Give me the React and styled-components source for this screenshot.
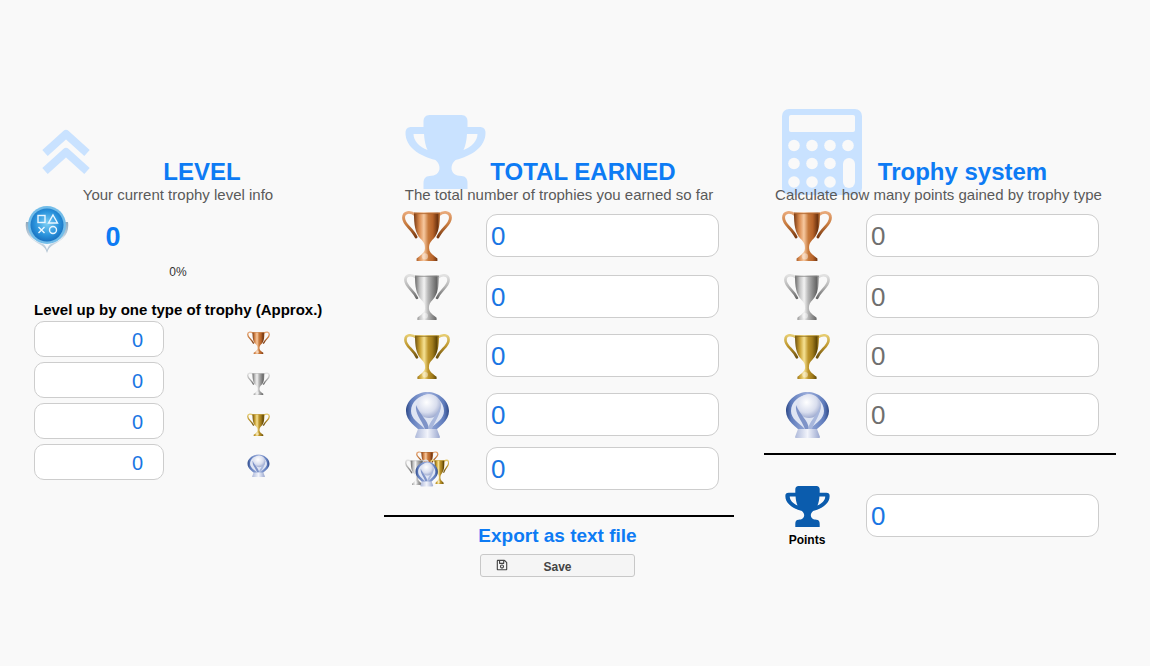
import React from "react";
import styled, { createGlobalStyle } from "styled-components";
import { FaRegSave } from "react-icons/fa";

const Global = createGlobalStyle`
  html, body { margin: 0; padding: 0; background: #f9f9f9; font-family: "Liberation Sans", Arial, sans-serif; }
  #root { width: 1150px; height: 666px; overflow: hidden; }
`;

const Page = styled.main`
  display: flex;
  align-items: flex-start;
  padding: 157px 0 0 18px;
  box-sizing: border-box;
  height: 666px;
`;
const Column = styled.section`
  position: relative;
  flex: none;
  width: ${(p) => p.$w}px;
  margin-right: ${(p) => p.$mr}px;
`;
const Watermark = styled.div`
  position: absolute;
  left: ${(p) => p.$x}px;
  top: ${(p) => p.$y}px;
  line-height: 0;
  z-index: 0;
`;
const Header = styled.header`
  position: relative;
  z-index: 1;
  text-align: center;
  padding-right: ${(p) => p.$pr || 0}px;
  margin-bottom: 10px;
`;
const Title = styled.h2`
  margin: 0;
  padding-left: 48px;
  font-size: 24px;
  line-height: 29px;
  font-weight: 700;
  color: #0d7bf4;
`;
const Subtitle = styled.p`
  margin: 0;
  font-size: 15px;
  line-height: 18px;
  color: #5a5a5a;
`;
const Row = styled.div`
  display: flex;
  align-items: center;
  height: 43px;
  margin-bottom: ${(p) => p.$gap || 0}px;
`;
const IconCell = styled.div`
  flex: none;
  width: 86px;
  margin-right: 16px;
  display: flex;
  justify-content: center;
  align-items: center;
  height: 43px;
  line-height: 0;
`;
const BigInput = styled.input`
  flex: none;
  width: 233px;
  height: 43px;
  box-sizing: border-box;
  padding: 2px 4px 0;
  font: 26px "Liberation Sans", Arial, sans-serif;
  color: ${(p) => (p.$muted ? "#6f6f6f" : "#1a76e3")};
  background: #fff;
  border: 1px solid #cdcdcd;
  border-radius: 11px;
  outline: none;
`;
const LevelRow = styled.div`
  display: flex;
  align-items: flex-start;
  height: 48px;
  padding-left: 7px;
  margin-top: -9px;
`;
const LevelValue = styled.div`
  width: 88px;
  padding-top: 16px;
  line-height: 32px;
  text-align: center;
  font-size: 27px;
  font-weight: 700;
  color: #0d7bf4;
`;
const Percent = styled.div`
  text-align: center;
  font-size: 12px;
  line-height: 14px;
  color: #333;
  margin-top: 12px;
`;
const LevelUpHeading = styled.h3`
  margin: 22px 0 3px 16px;
  font-size: 15px;
  line-height: 17px;
  font-weight: 700;
  color: #000;
  white-space: nowrap;
`;
const SmallRow = styled.div`
  display: flex;
  align-items: center;
  height: 36px;
  margin: 0 0 5px 16px;
`;
const SmallInput = styled.input`
  flex: none;
  width: 130px;
  height: 36px;
  box-sizing: border-box;
  padding: 2px 20px 0 0;
  text-align: right;
  font: 20px "Liberation Sans", Arial, sans-serif;
  color: #1a76e3;
  background: #fff;
  border: 1px solid #cdcdcd;
  border-radius: 10px;
  outline: none;
`;
const SmallIcon = styled.div`
  width: 188px;
  padding-top: 7px;
  margin-left: 14px;
  display: flex;
  justify-content: center;
  line-height: 0;
`;
const Rule = styled.hr`
  border: 0;
  height: 2px;
  background: #000;
  margin: ${(p) => p.$top}px 0 ${(p) => p.$bottom}px;
`;
const ExportBlock = styled.div`
  display: flex;
  flex-direction: column;
  align-items: center;
  padding-right: 3px;
`;
const ExportTitle = styled.h3`
  margin: 0 0 6px;
  font-size: 19px;
  line-height: 24px;
  font-weight: 700;
  color: #0d7bf4;
`;
const SaveButton = styled.button`
  position: relative;
  width: 155px;
  height: 23px;
  padding: 3px 0 0;
  background: #f5f5f5;
  border: 1px solid #c8c8c8;
  border-radius: 3px;
  font: 700 12px "Liberation Sans", Arial, sans-serif;
  color: #444;
  svg {
    position: absolute;
    left: 15px;
    top: 4px;
  }
`;
const PointsCell = styled.div`
  flex: none;
  width: 86px;
  margin-right: 16px;
  display: flex;
  flex-direction: column;
  align-items: center;
  line-height: 0;
  padding-top: 2px;
`;
const PointsLabel = styled.span`
  font-size: 12px;
  line-height: 14px;
  font-weight: 700;
  color: #000;
  margin-top: 6px;
`;

const TIERS = {
  bronze: ["#7a3a12", "#d98a4e", "#f7c9a0", "#b8642a", "#6e3410", "#c77a3d", "#e8a878"],
  silver: ["#6a6a6a", "#c4c4c4", "#f2f2f2", "#8e8e8e", "#666", "#b5b5b5", "#e2e2e2"],
  gold: ["#6e5210", "#c9a032", "#f6e294", "#a17c1c", "#614806", "#bd952c", "#e6cc70"],
};

const Defs = () => (
  <svg width="0" height="0" style={{ position: "absolute" }} aria-hidden="true">
    <defs>
      {Object.entries(TIERS).map(([k, c]) => (
        <React.Fragment key={k}>
          <linearGradient id={`${k}-b`} x1="0" x2="1" y1="0" y2="0">
            <stop offset="0" stopColor={c[0]} />
            <stop offset=".2" stopColor={c[1]} />
            <stop offset=".38" stopColor={c[2]} />
            <stop offset=".55" stopColor={c[5]} />
            <stop offset=".72" stopColor={c[3]} />
            <stop offset=".9" stopColor={c[4]} />
            <stop offset="1" stopColor={c[5]} />
          </linearGradient>
          <linearGradient id={`${k}-h`} x1="0" x2="0" y1="0" y2="1">
            <stop offset="0" stopColor={c[6]} />
            <stop offset=".5" stopColor={c[5]} />
            <stop offset="1" stopColor={c[0]} />
          </linearGradient>
        </React.Fragment>
      ))}
      <radialGradient id="pt-ball" cx=".4" cy=".35" r=".7">
        <stop offset="0" stopColor="#ffffff" />
        <stop offset=".6" stopColor="#d9deee" />
        <stop offset="1" stopColor="#98a5cc" />
      </radialGradient>
      <linearGradient id="pt-ring" x1="0" x2="1" y1="0" y2="0">
        <stop offset="0" stopColor="#2f4a88" />
        <stop offset=".12" stopColor="#5f7cbc" />
        <stop offset=".5" stopColor="#9fb0dc" />
        <stop offset=".88" stopColor="#5f7cbc" />
        <stop offset="1" stopColor="#2f4a88" />
      </linearGradient>
      <linearGradient id="pt-base" x1="0" x2="1" y1="0" y2="0">
        <stop offset="0" stopColor="#aeb9da" />
        <stop offset=".5" stopColor="#f2f4fb" />
        <stop offset="1" stopColor="#9aa7cf" />
      </linearGradient>
      <radialGradient id="lv-disc" cx=".5" cy=".45" r=".6">
        <stop offset="0" stopColor="#7ed0f5" />
        <stop offset=".6" stopColor="#2a93dc" />
        <stop offset="1" stopColor="#1467b8" />
      </radialGradient>
      <linearGradient id="lv-base" x1="0" x2="0" y1="0" y2="1">
        <stop offset="0" stopColor="#8fa9bd" />
        <stop offset=".6" stopColor="#cfdde8" />
        <stop offset="1" stopColor="#a8bccd" />
      </linearGradient>
    </defs>
  </svg>
);

const CupShape = ({ tier }) => (
  <g>
    <g fill="none" stroke={`url(#${tier}-h)`} strokeWidth="2.800" strokeLinecap="round">
      <path d="M13 5C8 1 1.500 1.500 1.500 7.500c0 7 8 10 12 19" />
      <path d="M35 5C40 1 46.500 1.500 46.500 7.500c0 7-8 10-12 19" />
    </g>
    <path
      d="M11.500 2.500h25c0 12-1 20-6.500 26-3 3-4 5-4 9 0 4 4 7 8 10v2.500H14V47.500c4-3 8-6 8-10 0-4-1-6-4-9-5.500-6-6.500-14-6.500-26z"
      fill={`url(#${tier}-b)`}
    />
    <path d="M11.500 2.500h25V4h-25z" fill={`url(#${tier}-h)`} opacity=".8" />
    <ellipse cx="22" cy="45.500" rx="3" ry="3" fill="#fff" opacity=".4" />
  </g>
);

const PlatinumShape = () => (
  <g>
    <path
      d="M22.500 1C33 1 44 9 44 20c0 10-10 16-17 22h-9C11 36 1 30 1 20 1 9 12 1 22.500 1z"
      fill="url(#pt-ring)"
    />
    <path d="M22.500 4C31 4 39 11 39 20c0 8-8 12-14 18h-5C14 32 6 28 6 20 6 11 14 4 22.500 4z" fill="#dfe5f3" />
    <circle cx="24" cy="15" r="12" fill="url(#pt-ball)" />
    <path d="M11 14c-1 9 5 14 9 24h4C23 29 15 24 11 14z" fill="#7e93c8" />
    <path d="M35 15c1 9-5 14-8 23h-4c2-9 9-13 12-23z" fill="#a8b7dc" />
    <path d="M13 38h19l3 8c0 1-1 1-2 1H12c-1 0-2 0-2-1z" fill="url(#pt-base)" />
  </g>
);

const Medal = ({ tier, w, h }) => (
  <svg width={w} height={h} viewBox={tier === "platinum" ? "0 0 45 47" : "0 0 48 50"} preserveAspectRatio="none">
    {tier === "platinum" ? <PlatinumShape /> : <CupShape tier={tier} />}
  </svg>
);

const Combo = () => (
  <svg width="44" height="36" viewBox="0 0 44 36">
    <g transform="translate(11 0) scale(.47 .42)"><CupShape tier="bronze" /></g>
    <g transform="translate(0 8) scale(.5 .52)"><CupShape tier="silver" /></g>
    <g transform="translate(25 8) scale(.4 .5)"><CupShape tier="gold" /></g>
    <g transform="translate(10 10) scale(.52 .54)"><PlatinumShape /></g>
  </svg>
);

const LevelBadge = () => (
  <svg width="44" height="48" viewBox="0 0 44 48">
    <path d="M1 17C-1 30 8 36 16 40c3 2 5 4 6 8 1-4 3-6 6-8 8-4 17-10 15-23z" fill="url(#lv-base)" />
    <path d="M4 30c3 5 9 7 14 9 2 1 3 3 4 6 1-3 2-5 4-6 5-2 11-4 14-9-4 5-11 7-18 8-7-1-14-3-18-8z" fill="#f5f8fb" />
    <circle cx="22" cy="20" r="19" fill="#73bde9" />
    <circle cx="22" cy="20" r="16.500" fill="url(#lv-disc)" />
    <g fill="none" stroke="#eaf6ff" strokeWidth="1.400">
      <rect x="13" y="10.500" width="7" height="7" />
      <path d="M28 10l4.500 8h-9z" />
      <path d="M13.500 22l6 6M19.500 22l-6 6" />
      <circle cx="28" cy="25" r="3.500" />
    </g>
  </svg>
);

const TROPHY_D =
  "M24 0H56C60 0 62 3 62 6V12H74C78 12 80 14 80 18C80 32 66 41 50 45C47 48 46 50 46 53C46 58 50 61 56 61C60 61 62 64 62 68V74H18V68C18 64 20 61 24 61C30 61 34 58 34 53C34 50 33 48 30 45C14 41 0 32 0 18C0 14 2 12 6 12H18V6C18 3 20 0 24 0ZM8 19C8 26 14 32 22 35C20 31 18.800 25 18.500 19ZM72 19H61.500C61.200 25 60 31 58 35C66 32 72 26 72 19Z";

const SolidTrophy = ({ w, h, color }) => (
  <svg width={w} height={h} viewBox="0 0 80 74">
    <path d={TROPHY_D} fill={color} fillRule="evenodd" />
  </svg>
);

const Chevrons = () => (
  <svg width="48" height="46" viewBox="0 0 48 46">
    <g fill="none" stroke="#c9e2ff" strokeWidth="8" strokeLinejoin="round">
      <path d="M3 24L24 5 45 24" />
      <path d="M3 42L24 23 45 42" />
    </g>
  </svg>
);

const Calculator = () => (
  <svg width="80" height="86" viewBox="0 0 80 86">
    <rect width="80" height="86" rx="7" fill="#c9e2ff" />
    <g fill="#f9f9f9">
      <rect x="7" y="6" width="66" height="17" rx="2" />
      {[12, 30, 48, 66].map((x) => <circle key={x} cx={x} cy="36.500" r="5.800" />)}
      {[12, 30, 48].map((x) => <circle key={x} cx={x} cy="54.500" r="5.800" />)}
      {[12, 30, 48].map((x) => <circle key={x} cx={x} cy="73" r="5.800" />)}
      <rect x="61" y="49" width="12" height="30" rx="6" />
    </g>
  </svg>
);

const RowsData = [
  { tier: "bronze", w: 50, h: 51 },
  { tier: "silver", w: 46, h: 47 },
  { tier: "gold", w: 46, h: 46 },
  { tier: "platinum", w: 45, h: 47 },
];
const gaps = [18, 16, 16, 11];
const smallSizes = [
  { tier: "bronze", w: 23, h: 23 },
  { tier: "silver", w: 23, h: 23 },
  { tier: "gold", w: 23, h: 23 },
  { tier: "platinum", w: 23, h: 23 },
];

export default function App() {
  return (
    <>
      <Global />
      <Defs />
      <Page>
        <Column $w={320} $mr={46}>
          <Watermark $x={24} $y={-28}><Chevrons /></Watermark>
          <Header>
            <Title>LEVEL</Title>
            <Subtitle>Your current trophy level info</Subtitle>
          </Header>
          <LevelRow>
            <LevelBadge />
            <LevelValue>0</LevelValue>
          </LevelRow>
          <Percent>0%</Percent>
          <LevelUpHeading>Level up by one type of trophy (Approx.)</LevelUpHeading>
          {smallSizes.map((s) => (
            <SmallRow key={s.tier}>
              <SmallInput readOnly value="0" />
              <SmallIcon><Medal {...s} /></SmallIcon>
            </SmallRow>
          ))}
        </Column>

        <Column $w={350} $mr={30}>
          <Watermark $x={21} $y={-42}>
            <SolidTrophy w={81} h={74} color="#c9e2ff" />
          </Watermark>
          <Header>
            <Title>TOTAL EARNED</Title>
            <Subtitle>The total number of trophies you earned so far</Subtitle>
          </Header>
          {RowsData.map((r, i) => (
            <Row key={r.tier} $gap={gaps[i]}>
              <IconCell><Medal {...r} /></IconCell>
              <BigInput readOnly value="0" />
            </Row>
          ))}
          <Row>
            <IconCell><Combo /></IconCell>
            <BigInput readOnly value="0" />
          </Row>
          <Rule $top={25} $bottom={7} />
          <ExportBlock>
            <ExportTitle>Export as text file</ExportTitle>
            <SaveButton>
              <FaRegSave size={12} />
              Save
            </SaveButton>
          </ExportBlock>
        </Column>

        <Column $w={352} $mr={0}>
          <Watermark $x={18} $y={-48}><Calculator /></Watermark>
          <Header $pr={3}>
            <Title>Trophy system</Title>
            <Subtitle>Calculate how many points gained by trophy type</Subtitle>
          </Header>
          {RowsData.map((r, i) => (
            <Row key={r.tier} $gap={i < 3 ? gaps[i] : 0}>
              <IconCell><Medal {...r} /></IconCell>
              <BigInput $muted readOnly value="0" />
            </Row>
          ))}
          <Rule $top={17} $bottom={39} />
          <Row>
            <PointsCell>
              <SolidTrophy w={45} h={41} color="#0b5cad" />
              <PointsLabel>Points</PointsLabel>
            </PointsCell>
            <BigInput readOnly value="0" />
          </Row>
        </Column>
      </Page>
    </>
  );
}
